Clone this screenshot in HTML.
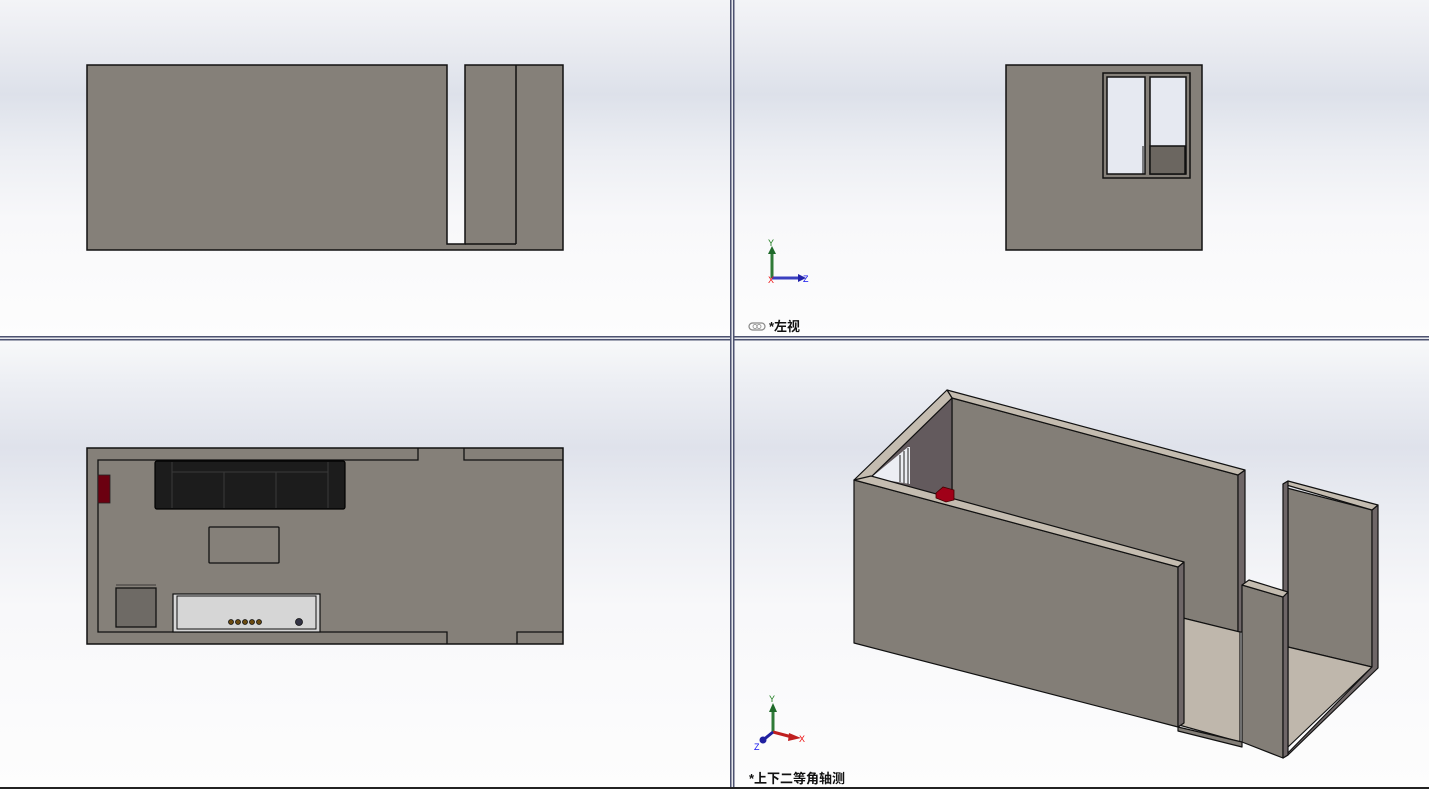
<!DOCTYPE html>
<html><head><meta charset="utf-8"><style>
html,body{margin:0;padding:0;background:#fff;}
svg{display:block;}
text{font-family:"Liberation Sans","Noto Sans CJK SC",sans-serif;}
</style></head><body>
<svg width="1429" height="789" viewBox="0 0 1429 789" xmlns="http://www.w3.org/2000/svg">
<defs>
<linearGradient id="bg" x1="0" y1="0" x2="0" y2="1">
<stop offset="0" stop-color="#f3f4f7"/><stop offset="0.15" stop-color="#e8eaf0"/>
<stop offset="0.28" stop-color="#dde1ea"/><stop offset="0.45" stop-color="#eceef3"/>
<stop offset="0.65" stop-color="#f8f8fa"/><stop offset="1" stop-color="#fdfdfd"/>
</linearGradient>
<linearGradient id="bg2" x1="0" y1="0" x2="0" y2="1">
<stop offset="0" stop-color="#f8f9fa"/><stop offset="0.1" stop-color="#eceef3"/>
<stop offset="0.24" stop-color="#dfe2eb"/><stop offset="0.4" stop-color="#eceef3"/>
<stop offset="0.6" stop-color="#f8f8fa"/><stop offset="1" stop-color="#fdfdfd"/>
</linearGradient>
</defs>
<rect x="0" y="0" width="1429" height="337" fill="url(#bg)"/>
<rect x="0" y="340" width="1429" height="447" fill="url(#bg2)"/>
<!-- dividers -->
<rect x="0" y="336" width="1429" height="1.5" fill="#4d5270"/>
<rect x="0" y="337.5" width="1429" height="1.5" fill="#e8e9ee"/>
<rect x="0" y="339" width="1429" height="1.5" fill="#4d5270"/>
<rect x="730" y="0" width="1.5" height="789" fill="#4d5270"/>
<rect x="731.5" y="0" width="1.5" height="789" fill="#e8e9ee"/>
<rect x="733" y="0" width="1.5" height="789" fill="#4d5270"/>
<rect x="0" y="787" width="1429" height="2" fill="#222"/>

<!-- top-left front view -->
<g fill="#858079" stroke="#111" stroke-width="1.5">
<polygon points="87,65 447,65 447,244 465,244 465,65 563,65 563,250 87,250"/>
<line x1="516" y1="65" x2="516" y2="244"/>
<line x1="465" y1="244" x2="516" y2="244"/>
</g>

<!-- top-right left view -->
<g stroke="#111" stroke-width="1.5">
<rect x="1006" y="65" width="196" height="185" fill="#858079"/>
<rect x="1103" y="73" width="87" height="105" fill="#858079"/>
<rect x="1107" y="77" width="38" height="97" fill="#e6e9f1"/>
<rect x="1150" y="77" width="36" height="97" fill="#e6e9f1"/>
<rect x="1150" y="146" width="35" height="28" fill="#6b6660"/>
</g>
<line x1="1143" y1="146" x2="1143" y2="174" stroke="#111" stroke-width="1"/>

<!-- triad top -->
<g stroke-width="3">
<line x1="772" y1="278" x2="772" y2="252" stroke="#2f7a37"/>
<line x1="772" y1="278" x2="800" y2="278" stroke="#3a3fc0"/>
</g>
<polygon points="768,254 772,246 776,254" fill="#1f6a2a"/>
<polygon points="798,274 806,278 798,282" fill="#2222aa"/>
<text x="768" y="246" font-size="9" fill="#1a7a1a" font-family="Liberation Mono">Y</text>
<text x="803" y="282" font-size="9" fill="#1111ee" font-family="Liberation Mono">Z</text>
<text x="768" y="283" font-size="9" fill="#ee1111" font-family="Liberation Mono">X</text>
<rect x="749" y="323" width="16" height="7" rx="3.5" fill="none" stroke="#888" stroke-width="1.2"/>
<circle cx="755" cy="326.5" r="2" fill="none" stroke="#888" stroke-width="0.8"/>
<circle cx="759" cy="326.5" r="2" fill="none" stroke="#888" stroke-width="0.8"/>
<text x="769" y="331" font-size="13" font-weight="bold" fill="#111">*左视</text>

<!-- bottom-left top view -->
<g fill="#858079" stroke="#111" stroke-width="1.5">
<rect x="87" y="448" width="476" height="196"/>
</g>
<g fill="none" stroke="#111" stroke-width="1.3">
<polyline points="418,448 418,460 98,460 98,632 447,632 447,644"/>
<polyline points="464,448 464,460 563,460"/>
<polyline points="517,644 517,632 563,632"/>
</g>
<rect x="98" y="475" width="12" height="28" fill="#6b0010" stroke="#222" stroke-width="0.8"/>
<rect x="155" y="461" width="190" height="48" rx="2" fill="#1c1c1c" stroke="#000" stroke-width="1.2"/>
<g stroke="#3a3a3a" stroke-width="1">
<line x1="172" y1="462" x2="172" y2="508"/><line x1="328" y1="462" x2="328" y2="508"/>
<line x1="224" y1="472" x2="224" y2="508"/><line x1="276" y1="472" x2="276" y2="508"/>
<line x1="172" y1="472" x2="328" y2="472"/>
</g>
<rect x="209" y="527" width="70" height="36" rx="1" fill="none" stroke="#111" stroke-width="1.3"/>
<rect x="116" y="588" width="40" height="39" fill="#6e6a65" stroke="#111" stroke-width="1.3"/>
<line x1="116" y1="585" x2="156" y2="585" stroke="#222" stroke-width="0.8"/>
<rect x="173" y="594" width="147" height="38" fill="#d6d6d6" stroke="#111" stroke-width="1.2"/>
<rect x="177" y="596" width="139" height="33" fill="none" stroke="#111" stroke-width="1"/>
<g fill="#6a4a10" stroke="#111" stroke-width="0.8">
<circle cx="231" cy="622" r="2.5"/><circle cx="238" cy="622" r="2.5"/><circle cx="245" cy="622" r="2.5"/><circle cx="252" cy="622" r="2.5"/><circle cx="259" cy="622" r="2.5"/>
</g>
<circle cx="299" cy="622" r="3.5" fill="#334" stroke="#111" stroke-width="0.8"/>

<!-- isometric -->
<g stroke="#111" stroke-width="1.2" stroke-linejoin="round">
<polygon points="952,398 1238,475 1238,632 1183,618 952,560" fill="#837e77"/>
<polygon points="952,398 952,505 871,477" fill="#635a5d"/>
<polygon points="873,476 908,447 910,447 910,484 885,480" fill="#eceef3" stroke="none"/>
<polygon points="1238,475 1245,470 1245,632 1238,632" fill="#6e6667"/>
<polygon points="947,390 1245,470 1238,475 952,398" fill="#c4bcb0"/>
<polygon points="947,390 952,398 871,477 854,480" fill="#c4bcb0"/>
<polygon points="1183,618 1240,632 1240,742 1179,725" fill="#bfb7ac"/>
<polygon points="1283,487 1372,510 1372,667 1288,647 1288,490" fill="#837e77"/>
<polygon points="1288,647 1372,667 1288,747" fill="#bfb7ac"/>
<polygon points="1372,510 1378,505 1378,668 1288,755 1283,758 1372,667" fill="#6e6667"/>
<polygon points="1283,484 1288,481 1378,505 1372,510" fill="#c4bcb0"/>
<polygon points="1283,484 1288,481 1288,647 1283,650" fill="#6e6667"/>
<polygon points="1242,585 1283,597 1283,758 1242,742" fill="#837e77"/>
<polygon points="1283,597 1288,592 1288,755 1283,758" fill="#6e6667"/>
<polygon points="1242,585 1249,580 1288,592 1283,597" fill="#c4bcb0"/>
<polygon points="1178,727 1242,742 1242,747 1178,731" fill="#837e77"/>
<polygon points="854,480 1178,567 1178,727 854,643" fill="#837e77"/>
<polygon points="1178,567 1184,562 1184,723 1178,727" fill="#6e6667"/>
<polygon points="854,480 871,476 1184,562 1178,567" fill="#c4bcb0"/>
</g>
<g stroke="#222" stroke-width="1">
<line x1="900" y1="455" x2="900" y2="482"/><line x1="904" y1="451" x2="904" y2="483"/><line x1="908" y1="448" x2="908" y2="484"/>
</g>
<polygon points="936,493 943,487 954,490 954,500 946,502 936,498" fill="#a00018" stroke="#400" stroke-width="0.8"/>

<!-- triad bottom -->
<line x1="773" y1="732" x2="773" y2="710" stroke="#2f7a37" stroke-width="3"/>
<polygon points="769,712 773,703 777,712" fill="#1f6a2a"/>
<line x1="773" y1="732" x2="792" y2="737" stroke="#c02020" stroke-width="3"/>
<polygon points="789,733 801,738 788,741" fill="#c02020"/>
<line x1="773" y1="732" x2="762" y2="741" stroke="#2020a0" stroke-width="3"/>
<circle cx="763" cy="740" r="3.5" fill="#2020a0"/>
<text x="769" y="702" font-size="9" fill="#1a7a1a" font-family="Liberation Mono">Y</text>
<text x="799" y="742" font-size="9" fill="#ee1111" font-family="Liberation Mono">X</text>
<text x="754" y="750" font-size="9" fill="#1111ee" font-family="Liberation Mono">Z</text>
<text x="749" y="783" font-size="13" font-weight="bold" fill="#111">*上下二等角轴测</text>
</svg>
</body></html>
